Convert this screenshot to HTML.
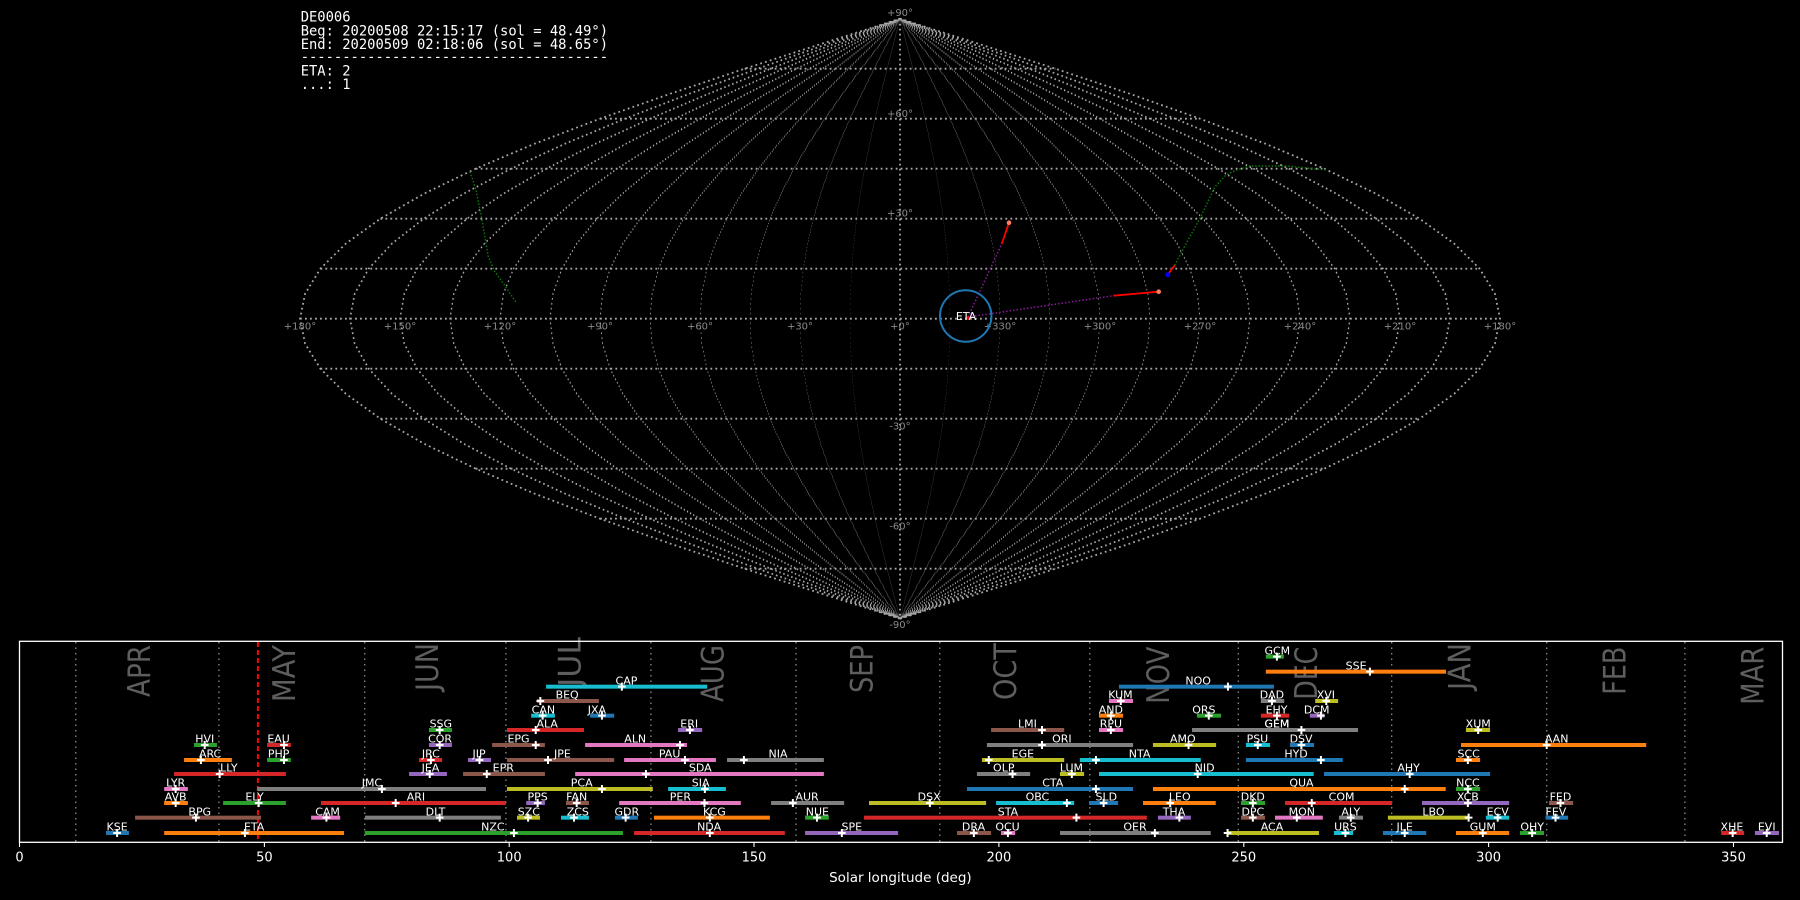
<!DOCTYPE html>
<html><head><meta charset="utf-8"><style>
html,body{margin:0;padding:0;background:#000;width:1800px;height:900px;overflow:hidden}
svg{display:block}
.lb{font-family:"DejaVu Sans","Liberation Sans",sans-serif;font-size:33px;fill:#fff;text-anchor:middle;transform-box:fill-box;transform-origin:center;transform:scaleX(0.871)}
.mk{stroke:#fff;stroke-width:2;vector-effect:non-scaling-stroke;fill:none}
.B{fill:#1f77b4}.O{fill:#ff7f0e}.G{fill:#2ca02c}.R{fill:#d62728}.P{fill:#9467bd}.N{fill:#8c564b}.K{fill:#e377c2}.Y{fill:#7f7f7f}.L{fill:#bcbd22}.C{fill:#17becf}
.gr{stroke:#a8a8a8;stroke-width:1.8;stroke-dasharray:1.8 3.2;fill:none;vector-effect:non-scaling-stroke}
.sl{font-family:"DejaVu Sans","Liberation Sans",sans-serif;font-size:10px;fill:#8a8a8a;text-anchor:middle}
.mo{font-family:"DejaVu Sans","Liberation Sans",sans-serif;font-size:31px;fill:#5e5e5e;text-anchor:end}
.tk{font-family:"DejaVu Sans","Liberation Sans",sans-serif;font-size:13px;fill:#fff;text-anchor:middle}
</style></head><body>
<svg width="1800" height="900" viewBox="0 0 1800 900" xmlns="http://www.w3.org/2000/svg">
<defs>
<path id="m" d="M0,-300 L78.3,-275 155.3,-250 229.6,-225 300,-200 365.3,-175 424.3,-150 476,-125 519.6,-100 554.3,-75 579.6,-50 594.9,-25 600,0 594.9,25 579.6,50 554.3,75 519.6,100 476,125 424.3,150 365.3,175 300,200 229.6,225 155.3,250 78.3,275 0,300"/>
</defs>
<g transform="translate(900,318.7)">
<line class="gr" x1="0" y1="-300" x2="0" y2="300"/>
<use href="#m" class="gr" transform="scale(0.0833,1)"/><use href="#m" class="gr" transform="scale(-0.0833,1)"/>
<use href="#m" class="gr" transform="scale(0.1667,1)"/><use href="#m" class="gr" transform="scale(-0.1667,1)"/>
<use href="#m" class="gr" transform="scale(0.25,1)"/><use href="#m" class="gr" transform="scale(-0.25,1)"/>
<use href="#m" class="gr" transform="scale(0.3333,1)"/><use href="#m" class="gr" transform="scale(-0.3333,1)"/>
<use href="#m" class="gr" transform="scale(0.4167,1)"/><use href="#m" class="gr" transform="scale(-0.4167,1)"/>
<use href="#m" class="gr" transform="scale(0.5,1)"/><use href="#m" class="gr" transform="scale(-0.5,1)"/>
<use href="#m" class="gr" transform="scale(0.5833,1)"/><use href="#m" class="gr" transform="scale(-0.5833,1)"/>
<use href="#m" class="gr" transform="scale(0.6667,1)"/><use href="#m" class="gr" transform="scale(-0.6667,1)"/>
<use href="#m" class="gr" transform="scale(0.75,1)"/><use href="#m" class="gr" transform="scale(-0.75,1)"/>
<use href="#m" class="gr" transform="scale(0.8333,1)"/><use href="#m" class="gr" transform="scale(-0.8333,1)"/>
<use href="#m" class="gr" transform="scale(0.9167,1)"/><use href="#m" class="gr" transform="scale(-0.9167,1)"/>
<use href="#m" class="gr" transform="scale(1,1)"/><use href="#m" class="gr" transform="scale(-1,1)"/>
<line class="gr" x1="-600" y1="0" x2="600" y2="0"/>
<line class="gr" x1="-579.6" y1="-50" x2="579.6" y2="-50"/><line class="gr" x1="-579.6" y1="50" x2="579.6" y2="50"/>
<line class="gr" x1="-519.6" y1="-100" x2="519.6" y2="-100"/><line class="gr" x1="-519.6" y1="100" x2="519.6" y2="100"/>
<line class="gr" x1="-424.3" y1="-150" x2="424.3" y2="-150"/><line class="gr" x1="-424.3" y1="150" x2="424.3" y2="150"/>
<line class="gr" x1="-300" y1="-200" x2="300" y2="-200"/><line class="gr" x1="-300" y1="200" x2="300" y2="200"/>
<line class="gr" x1="-155.3" y1="-250" x2="155.3" y2="-250"/><line class="gr" x1="-155.3" y1="250" x2="155.3" y2="250"/>
</g>
<g class="sl">
<text x="300" y="329.5">+180°</text><text x="400" y="329.5">+150°</text><text x="500" y="329.5">+120°</text><text x="600" y="329.5">+90°</text><text x="700" y="329.5">+60°</text><text x="800" y="329.5">+30°</text><text x="900" y="329.5">+0°</text><text x="1000" y="329.5">+330°</text><text x="1100" y="329.5">+300°</text><text x="1200" y="329.5">+270°</text><text x="1300" y="329.5">+240°</text><text x="1400" y="329.5">+210°</text><text x="1500" y="329.5">+180°</text>
<text x="900" y="16">+90°</text><text x="900" y="117">+60°</text><text x="900" y="216.5">+30°</text><text x="900" y="429.5">-30°</text><text x="900" y="529.5">-60°</text><text x="900" y="628">-90°</text>
</g>
<polyline points="470,171.7 476,190 481.7,218.3 488.3,256.7 495,272 503.3,283.3 516.7,303.3" fill="none" stroke="#0a7a0a" stroke-width="1.4" stroke-dasharray="1.5 1.8"/>
<polyline points="1174.7,265.3 1188,240 1200,218.3 1215,186.7 1226,175 1236.7,170 1250,166 1286.7,166 1326.7,170" fill="none" stroke="#0a7a0a" stroke-width="1.4" stroke-dasharray="1.5 1.8"/>
<line x1="968" y1="317" x2="1001.7" y2="244" stroke="#8b1a9b" stroke-width="1.5" stroke-dasharray="1.5 2"/>
<line x1="968" y1="317" x2="1113.3" y2="295.7" stroke="#8b1a9b" stroke-width="1.5" stroke-dasharray="1.5 2"/>
<line x1="1001.7" y1="244" x2="1009" y2="222.7" stroke="#ff0000" stroke-width="1.8"/>
<line x1="1113.3" y1="295.7" x2="1158.7" y2="291.7" stroke="#ff0000" stroke-width="1.8"/>
<line x1="1167.7" y1="274.7" x2="1174.7" y2="265.3" stroke="#ff0000" stroke-width="1.8"/>
<circle cx="1009" cy="222.7" r="2.3" fill="#ff7f60"/>
<circle cx="1158.7" cy="291.7" r="2.3" fill="#ff7f60"/>
<circle cx="1167.7" cy="274.7" r="2.5" fill="#0000ff"/>
<circle cx="965.7" cy="316" r="25.7" fill="none" stroke="#1f77b4" stroke-width="2"/>
<circle cx="968" cy="318" r="1.8" fill="#ff0000"/>
<text x="966" y="320" font-family="DejaVu Sans, Liberation Sans, sans-serif" font-size="11" fill="#fff" text-anchor="middle">ETA</text>
<g font-family="DejaVu Sans Mono, Liberation Mono, monospace" font-size="13.8" fill="#fff">
<text x="300.7" y="21.5">DE0006</text>
<text x="300.7" y="35.3">Beg: 20200508 22:15:17 (sol = 48.49°)</text>
<text x="300.7" y="49">End: 20200509 02:18:06 (sol = 48.65°)</text>
<text x="300.7" y="61.5">-------------------------------------</text>
<text x="300.7" y="75.5">ETA: 2</text>
<text x="300.7" y="89">...: 1</text>
</g>
<g stroke="#8a8a8a" stroke-width="1.3" stroke-dasharray="1.5 4">
<line x1="75.8" y1="642" x2="75.8" y2="842"/><line x1="218.9" y1="642" x2="218.9" y2="842"/><line x1="364.7" y1="642" x2="364.7" y2="842"/><line x1="505.9" y1="642" x2="505.9" y2="842"/><line x1="650.9" y1="642" x2="650.9" y2="842"/><line x1="796" y1="642" x2="796" y2="842"/><line x1="939.8" y1="642" x2="939.8" y2="842"/><line x1="1089.8" y1="642" x2="1089.8" y2="842"/><line x1="1238.3" y1="642" x2="1238.3" y2="842"/><line x1="1391.7" y1="642" x2="1391.7" y2="842"/><line x1="1546.7" y1="642" x2="1546.7" y2="842"/><line x1="1684.9" y1="642" x2="1684.9" y2="842"/>
</g>
<g class="mo">
<text transform="translate(150,645) rotate(-90)" textLength="52" lengthAdjust="spacingAndGlyphs">APR</text>
<text transform="translate(295,645) rotate(-90)" textLength="57" lengthAdjust="spacingAndGlyphs">MAY</text>
<text transform="translate(438,643) rotate(-90)" textLength="48" lengthAdjust="spacingAndGlyphs">JUN</text>
<text transform="translate(580.5,637) rotate(-90)" textLength="50" lengthAdjust="spacingAndGlyphs">JUL</text>
<text transform="translate(723.5,645) rotate(-90)" textLength="57" lengthAdjust="spacingAndGlyphs">AUG</text>
<text transform="translate(872.5,645) rotate(-90)" textLength="48" lengthAdjust="spacingAndGlyphs">SEP</text>
<text transform="translate(1016,643) rotate(-90)" textLength="57" lengthAdjust="spacingAndGlyphs">OCT</text>
<text transform="translate(1169,646.7) rotate(-90)" textLength="57" lengthAdjust="spacingAndGlyphs">NOV</text>
<text transform="translate(1317,646.7) rotate(-90)" textLength="53" lengthAdjust="spacingAndGlyphs">DEC</text>
<text transform="translate(1470.5,643) rotate(-90)" textLength="47" lengthAdjust="spacingAndGlyphs">JAN</text>
<text transform="translate(1625.5,646.7) rotate(-90)" textLength="48" lengthAdjust="spacingAndGlyphs">FEB</text>
<text transform="translate(1763.5,646.7) rotate(-90)" textLength="58" lengthAdjust="spacingAndGlyphs">MAR</text>
</g>
<line x1="257.9" y1="642" x2="257.9" y2="842" stroke="#ff0000" stroke-width="2" stroke-dasharray="5 3"/>

<g transform="translate(0,550) scale(0.38267,0.33333)">
<rect class="B" x="277" y="843" width="60" height="12"/><rect class="O" x="429" y="843" width="470" height="12"/><rect class="G" x="953" y="843" width="675" height="12"/>
<rect class="N" x="353" y="797" width="329" height="12"/><rect class="K" x="813" y="797" width="76" height="12"/><rect class="Y" x="954" y="797" width="355" height="12"/><rect class="L" x="1351" y="797" width="60" height="12"/><rect class="C" x="1466" y="797" width="73" height="12"/>
<rect class="O" x="429" y="753" width="62" height="12"/><rect class="G" x="583" y="753" width="164" height="12"/><rect class="R" x="839" y="753" width="483" height="12"/><rect class="P" x="1375" y="753" width="49" height="12"/><rect class="N" x="1479" y="753" width="60" height="12"/>
<rect class="K" x="429" y="711" width="62" height="12"/><rect class="Y" x="672" y="711" width="598" height="12"/><rect class="L" x="1325" y="711" width="381" height="12"/>
<rect class="R" x="455" y="666" width="292" height="12"/><rect class="P" x="1069" y="666" width="99" height="12"/><rect class="N" x="1210" y="666" width="214" height="12"/><rect class="K" x="1503" y="666" width="650" height="12"/>
<rect class="O" x="481" y="624" width="125" height="12"/><rect class="G" x="698" y="624" width="62" height="12"/><rect class="R" x="1095" y="624" width="60" height="12"/><rect class="P" x="1223" y="624" width="60" height="12"/><rect class="N" x="1325" y="624" width="280" height="12"/>
<rect class="G" x="507" y="579" width="60" height="12"/><rect class="R" x="698" y="579" width="62" height="12"/><rect class="P" x="1121" y="579" width="60" height="12"/><rect class="N" x="1286" y="579" width="138" height="12"/><rect class="K" x="1529" y="579" width="266" height="12"/>
<rect class="G" x="1121" y="534" width="60" height="12"/><rect class="R" x="1325" y="534" width="201" height="12"/>
<rect class="C" x="1388" y="491" width="62" height="12"/><rect class="B" x="1542" y="491" width="63" height="12"/>
<rect class="N" x="1403" y="447" width="162" height="12"/>
<rect class="C" x="1427" y="404" width="421" height="12"/>
<path class="mk" d="M296,849h20M306,837v24 M630,849h20M640,837v24 M1333,849h20M1343,837v24 M502,803h20M512,791v24 M843,803h20M853,791v24 M1139,803h20M1149,791v24 M1370,803h20M1380,791v24 M1490,803h20M1500,791v24 M449,759h20M459,747v24 M666,759h20M676,747v24 M1024,759h20M1034,747v24 M1395,759h20M1405,747v24 M1497,759h20M1507,747v24 M449,717h20M459,705v24 M988,717h20M998,705v24 M1563,717h20M1573,705v24 M564,672h20M574,660v24 M1113,672h20M1123,660v24 M1262,672h20M1272,660v24 M1678,672h20M1688,660v24 M515,630h20M525,618v24 M732,630h20M742,618v24 M1116,630h20M1126,618v24 M1243,630h20M1253,618v24 M1422,630h20M1432,618v24 M525,585h20M535,573v24 M732,585h20M742,573v24 M1139,585h20M1149,573v24 M1390,585h20M1400,573v24 M1767,585h20M1777,573v24 M1139,540h20M1149,528v24 M1390,540h20M1400,528v24 M1408,497h20M1418,485v24 M1563,497h20M1573,485v24 M1402,453h20M1412,441v24 M1615,410h20M1625,398v24"/>
<text class="lb" x="306" y="842">KSE</text><text class="lb" x="664" y="842">ETA</text><text class="lb" x="1288" y="842">NZC</text>
<text class="lb" x="522" y="796">BPG</text><text class="lb" x="856" y="796">CAM</text><text class="lb" x="1138" y="796">DLT</text><text class="lb" x="1382" y="796">SZC</text><text class="lb" x="1510" y="796">ZCS</text>
<text class="lb" x="459" y="752">AVB</text><text class="lb" x="665" y="752">ELY</text><text class="lb" x="1087" y="752">ARI</text><text class="lb" x="1405" y="752">PPS</text><text class="lb" x="1507" y="752">FAN</text>
<text class="lb" x="459" y="710">LYR</text><text class="lb" x="972" y="710">JMC</text><text class="lb" x="1520" y="710">PCA</text>
<text class="lb" x="598" y="665">LLY</text><text class="lb" x="1125" y="665">JEA</text><text class="lb" x="1315" y="665">EPR</text><text class="lb" x="1830" y="665">SDA</text>
<text class="lb" x="549" y="623">ARC</text><text class="lb" x="728" y="623">PHP</text><text class="lb" x="1126" y="623">JRC</text><text class="lb" x="1252" y="623">JIP</text><text class="lb" x="1470" y="623">JPE</text>
<text class="lb" x="535" y="578">HVI</text><text class="lb" x="728" y="578">EAU</text><text class="lb" x="1150" y="578">COR</text><text class="lb" x="1355" y="578">EPG</text><text class="lb" x="1660" y="578">ALN</text>
<text class="lb" x="1152" y="533">SSG</text><text class="lb" x="1430" y="533">ALA</text>
<text class="lb" x="1420" y="490">CAN</text><text class="lb" x="1560" y="490">JXA</text>
<text class="lb" x="1482" y="446">BEQ</text>
<text class="lb" x="1637" y="403">CAP</text>
</g>

<g transform="translate(600,550) scale(0.38267,0.33333)">
<rect class="R" x="89" y="843" width="394" height="12"/><rect class="P" x="536" y="843" width="243" height="12"/><rect class="N" x="933" y="843" width="89" height="12"/><rect class="K" x="1048" y="843" width="37" height="12"/><rect class="Y" x="1202" y="843" width="394" height="12"/>
<rect class="B" x="39" y="797" width="60" height="12"/><rect class="O" x="141" y="797" width="303" height="12"/><rect class="G" x="536" y="797" width="62" height="12"/><rect class="R" x="690" y="797" width="739" height="12"/><rect class="P" x="1458" y="797" width="86" height="12"/>
<rect class="K" x="50" y="753" width="318" height="12"/><rect class="Y" x="447" y="753" width="191" height="12"/><rect class="L" x="703" y="753" width="306" height="12"/><rect class="C" x="1035" y="753" width="204" height="12"/><rect class="B" x="1278" y="753" width="76" height="12"/><rect class="O" x="1419" y="753" width="190" height="12"/>
<rect class="C" x="178" y="711" width="151" height="12"/><rect class="B" x="959" y="711" width="434" height="12"/><rect class="O" x="1445" y="711" width="765" height="12"/>
<rect class="Y" x="985" y="666" width="139" height="12"/><rect class="L" x="1202" y="666" width="63" height="12"/><rect class="C" x="1304" y="666" width="561" height="12"/>
<rect class="K" x="63" y="624" width="240" height="12"/><rect class="Y" x="332" y="624" width="253" height="12"/><rect class="L" x="998" y="624" width="215" height="12"/><rect class="C" x="1254" y="624" width="316" height="12"/>
<rect class="Y" x="1011" y="579" width="382" height="12"/><rect class="L" x="1445" y="579" width="165" height="12"/>
<rect class="P" x="204" y="534" width="63" height="12"/><rect class="N" x="1022" y="534" width="191" height="12"/><rect class="K" x="1304" y="534" width="63" height="12"/><rect class="Y" x="1547" y="534" width="434" height="12"/>
<rect class="O" x="1304" y="491" width="63" height="12"/><rect class="G" x="1560" y="491" width="63" height="12"/>
<rect class="K" x="1330" y="447" width="63" height="12"/>
<rect class="B" x="1356" y="404" width="405" height="12"/>
<path class="mk" d="M277,849h20M287,837v24 M622,849h20M632,837v24 M967,849h20M977,837v24 M1056,849h20M1066,837v24 M1440,849h20M1450,837v24 M57,803h20M67,791v24 M277,803h20M287,791v24 M557,803h20M567,791v24 M1235,803h20M1245,791v24 M1504,803h20M1514,791v24 M263,759h20M273,747v24 M494,759h20M504,747v24 M852,759h20M862,747v24 M1210,759h20M1220,747v24 M1306,759h20M1316,747v24 M1480,759h20M1490,747v24 M264,717h20M274,705v24 M1286,717h20M1296,705v24 M1068,672h20M1078,660v24 M1223,672h20M1233,660v24 M1552,672h20M1562,660v24 M212,630h20M222,618v24 M366,630h20M376,618v24 M1006,630h20M1016,618v24 M1286,630h20M1296,618v24 M1145,585h20M1155,573v24 M1528,585h20M1538,573v24 M225,540h20M235,528v24 M1145,540h20M1155,528v24 M1325,540h20M1335,528v24 M1325,497h20M1335,485v24 M1351,453h20M1361,441v24"/>
<text class="lb" x="285" y="842">NDA</text><text class="lb" x="658" y="842">SPE</text><text class="lb" x="976" y="842">DRA</text><text class="lb" x="1065" y="842">OCU</text><text class="lb" x="1398" y="842">OER</text>
<text class="lb" x="70" y="796">GDR</text><text class="lb" x="299" y="796">KCG</text><text class="lb" x="568" y="796">NUE</text><text class="lb" x="1066" y="796">STA</text><text class="lb" x="1500" y="796">THA</text>
<text class="lb" x="210" y="752">PER</text><text class="lb" x="541" y="752">AUR</text><text class="lb" x="860" y="752">DSX</text><text class="lb" x="1143" y="752">OBC</text><text class="lb" x="1323" y="752">SLD</text><text class="lb" x="1515" y="752">LEO</text>
<text class="lb" x="263" y="710">SIA</text><text class="lb" x="1183" y="710">CTA</text><text class="lb" x="1833" y="710">QUA</text>
<text class="lb" x="1055" y="665">OLP</text><text class="lb" x="1232" y="665">LUM</text><text class="lb" x="1580" y="665">NID</text>
<text class="lb" x="182" y="623">PAU</text><text class="lb" x="465" y="623">NIA</text><text class="lb" x="1105" y="623">EGE</text><text class="lb" x="1410" y="623">NTA</text>
<text class="lb" x="1207" y="578">ORI</text><text class="lb" x="1523" y="578">AMO</text>
<text class="lb" x="233" y="533">ERI</text><text class="lb" x="1117" y="533">LMI</text><text class="lb" x="1335" y="533">RPU</text><text class="lb" x="1769" y="533">GEM</text>
<text class="lb" x="1335" y="490">AND</text><text class="lb" x="1578" y="490">ORS</text>
<text class="lb" x="1360" y="446">KUM</text>
<text class="lb" x="1563" y="403">NOO</text>
</g>

<g transform="translate(1200,550) scale(0.38267,0.33333)">
<rect class="L" x="72" y="843" width="239" height="12"/><rect class="C" x="350" y="843" width="50" height="12"/><rect class="B" x="478" y="843" width="113" height="12"/><rect class="O" x="669" y="843" width="139" height="12"/><rect class="G" x="836" y="843" width="63" height="12"/><rect class="R" x="1362" y="843" width="60" height="12"/><rect class="P" x="1450" y="843" width="63" height="12"/>
<rect class="N" x="107" y="797" width="63" height="12"/><rect class="K" x="196" y="797" width="125" height="12"/><rect class="Y" x="363" y="797" width="63" height="12"/><rect class="L" x="491" y="797" width="211" height="12"/><rect class="C" x="747" y="797" width="61" height="12"/><rect class="B" x="903" y="797" width="59" height="12"/>
<rect class="G" x="107" y="753" width="63" height="12"/><rect class="R" x="222" y="753" width="280" height="12"/><rect class="P" x="580" y="753" width="228" height="12"/><rect class="N" x="912" y="753" width="63" height="12"/>
<rect class="G" x="669" y="711" width="63" height="12"/>
<rect class="B" x="324" y="666" width="434" height="12"/>
<rect class="B" x="120" y="624" width="253" height="12"/><rect class="O" x="669" y="624" width="63" height="12"/>
<rect class="C" x="120" y="579" width="63" height="12"/><rect class="B" x="235" y="579" width="63" height="12"/><rect class="O" x="682" y="579" width="484" height="12"/>
<rect class="L" x="695" y="534" width="63" height="12"/>
<rect class="R" x="159" y="491" width="74" height="12"/><rect class="P" x="287" y="491" width="38" height="12"/>
<rect class="Y" x="159" y="447" width="61" height="12"/><rect class="L" x="301" y="447" width="60" height="12"/>
<rect class="O" x="172" y="359" width="471" height="12"/>
<rect class="G" x="172" y="314" width="47" height="12"/>
<path class="mk" d="M62,849h20M72,837v24 M370,849h20M380,837v24 M525,849h20M535,837v24 M729,849h20M739,837v24 M858,849h20M868,837v24 M1382,849h20M1392,837v24 M1471,849h20M1481,837v24 M128,803h20M138,791v24 M243,803h20M253,791v24 M384,803h20M394,791v24 M692,803h20M702,791v24 M768,803h20M778,791v24 M919,803h20M929,791v24 M128,759h20M138,747v24 M282,759h20M292,747v24 M690,759h20M700,747v24 M932,759h20M942,747v24 M525,717h20M535,705v24 M690,717h20M700,705v24 M538,672h20M548,660v24 M306,630h20M316,618v24 M690,630h20M700,618v24 M141,585h20M151,573v24 M255,585h20M265,573v24 M896,585h20M906,573v24 M255,540h20M265,528v24 M717,540h20M727,528v24 M13,497h20M23,485v24 M191,497h20M201,485v24 M306,497h20M316,485v24 M178,453h20M188,441v24 M320,453h20M330,441v24 M63,410h20M73,398v24 M434,365h20M444,353v24 M191,320h20M201,308v24"/>
<text class="lb" x="188" y="842">ACA</text><text class="lb" x="380" y="842">URS</text><text class="lb" x="535" y="842">JLE</text><text class="lb" x="739" y="842">GUM</text><text class="lb" x="868" y="842">OHY</text><text class="lb" x="1390" y="842">XHE</text><text class="lb" x="1481" y="842">EVI</text>
<text class="lb" x="138" y="796">DPC</text><text class="lb" x="266" y="796">MON</text><text class="lb" x="394" y="796">ALY</text><text class="lb" x="610" y="796">LBO</text><text class="lb" x="778" y="796">ECV</text><text class="lb" x="930" y="796">FEV</text>
<text class="lb" x="138" y="752">DKD</text><text class="lb" x="370" y="752">COM</text><text class="lb" x="700" y="752">XCB</text><text class="lb" x="942" y="752">FED</text>
<text class="lb" x="700" y="710">NCC</text>
<text class="lb" x="545" y="665">AHY</text>
<text class="lb" x="251" y="623">HYD</text><text class="lb" x="702" y="623">SCC</text>
<text class="lb" x="150" y="578">PSU</text><text class="lb" x="264" y="578">DSV</text><text class="lb" x="932" y="578">AAN</text>
<text class="lb" x="201" y="533">GEM</text><text class="lb" x="727" y="533">XUM</text>
<text class="lb" x="200" y="490">EHY</text><text class="lb" x="305" y="490">DCM</text>
<text class="lb" x="188" y="446">DAD</text><text class="lb" x="329" y="446">XVI</text>
<text class="lb" x="408" y="358">SSE</text>
<text class="lb" x="202" y="313">GCM</text>
</g>

<rect x="19.5" y="641.3" width="1763" height="201" fill="none" stroke="#fff" stroke-width="1.3"/>
<g stroke="#fff" stroke-width="1.1">
<line x1="19.5" y1="842" x2="19.5" y2="847"/><line x1="264.4" y1="842" x2="264.4" y2="847"/><line x1="509.2" y1="842" x2="509.2" y2="847"/><line x1="754" y1="842" x2="754" y2="847"/><line x1="998.9" y1="842" x2="998.9" y2="847"/><line x1="1243.8" y1="842" x2="1243.8" y2="847"/><line x1="1488.6" y1="842" x2="1488.6" y2="847"/><line x1="1733.5" y1="842" x2="1733.5" y2="847"/>
</g>
<g class="tk">
<text x="19.5" y="861.5">0</text><text x="264.4" y="861.5">50</text><text x="509.2" y="861.5">100</text><text x="754" y="861.5">150</text><text x="998.9" y="861.5">200</text><text x="1243.8" y="861.5">250</text><text x="1488.6" y="861.5">300</text><text x="1733.5" y="861.5">350</text>
<text x="900.4" y="882" font-size="13.5">Solar longitude (deg)</text>
</g>
</svg>
</body></html>
